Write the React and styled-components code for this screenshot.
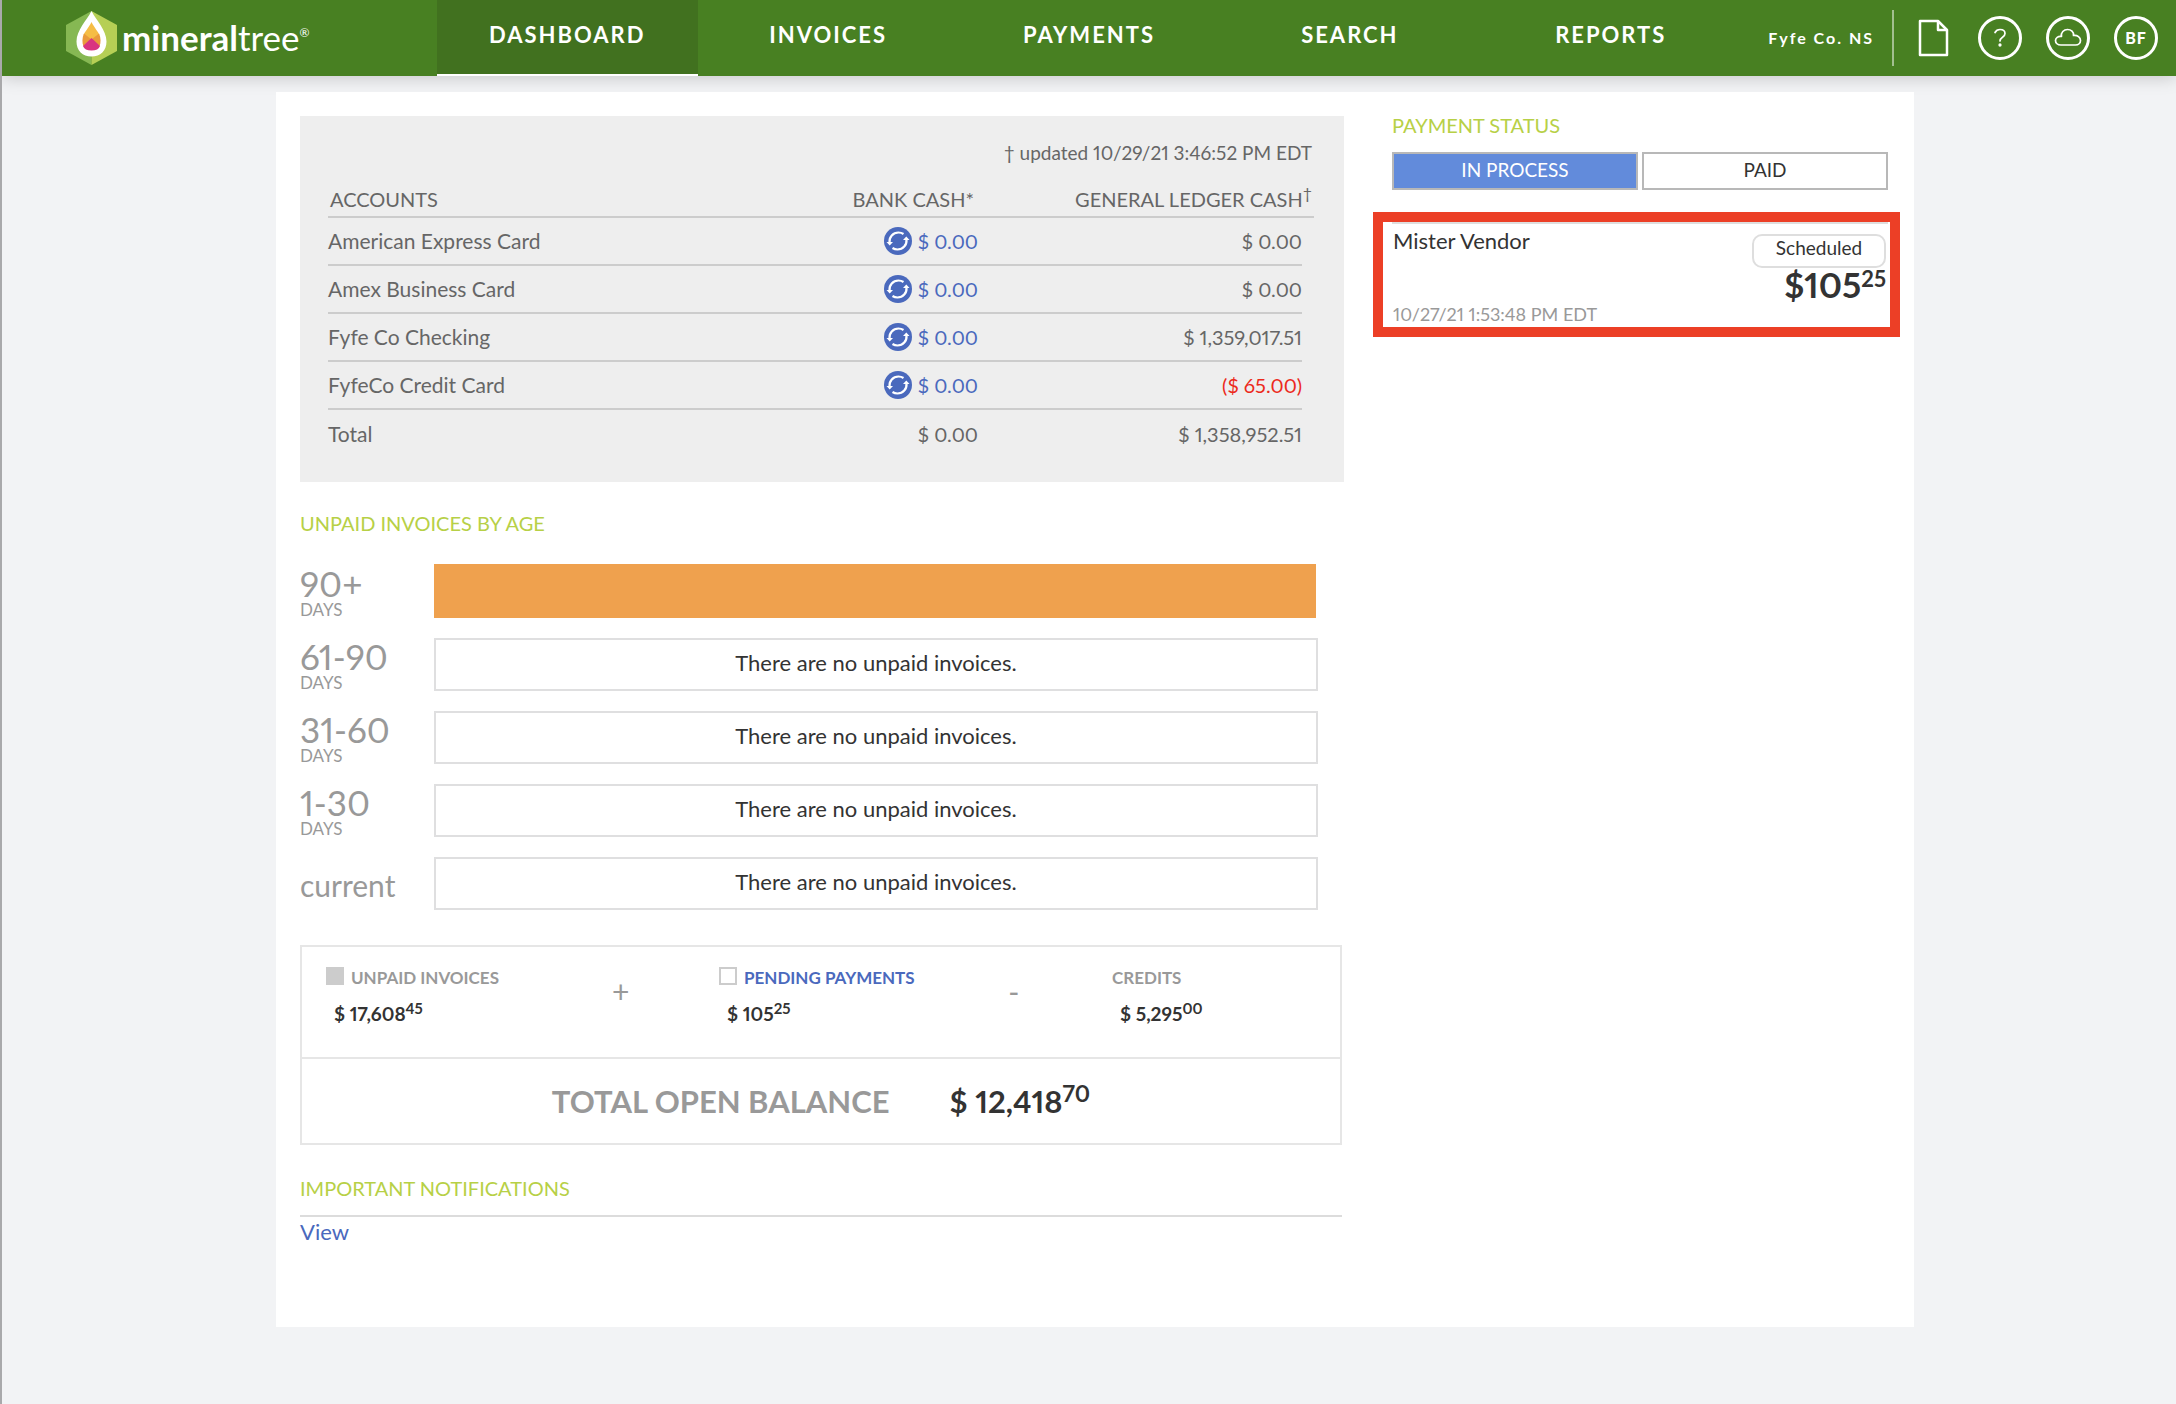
import React, { useState } from 'react'
import styled, { createGlobalStyle } from "styled-components"

const GlobalStyle = createGlobalStyle`
  * {
    box-sizing: border-box;
  }
  html {
    background: #f2f3f5;
  }
  body {
    margin: 0;
    border-left: 2px solid #a9a9ab;
    min-height: 100vh;
    font-family: Lato, "Open Sans", sans-serif;
    font-size: 20px;
    line-height: 24px;
    font-variant-numeric: proportional-nums;
    color: #333;
  }
  button, input {
    font: inherit;
    font-variant-numeric: inherit;
    color: inherit;
    margin: 0;
    padding: 0;
  }
`

const Header = styled.header`
  display: flex;
  height: 76px;
  background: #488022;
  color: white;
  box-shadow: 0 2px 16px rgba(0, 0, 0, 0.18);
`

const Brand = styled.a`
  display: flex;
  align-items: center;
  gap: 5px;
  width: 20%;
  padding-left: 64px;
  color: white;
  text-decoration: none;
  svg {
    flex: none;
  }
`

const BrandName = styled.span`
  font-size: 35px;
  line-height: 40px;
  padding-bottom: 2px;
  font-weight: 700;
  white-space: nowrap;
`

const BrandLight = styled.span`
  font-weight: 400;
`

const BrandMark = styled.sup`
  font-size: 12px;
  line-height: 12px;
  vertical-align: 14px;
`

const Nav = styled.nav`
  display: grid;
  grid-template-columns: repeat(5, 1fr);
  width: 60%;
`

const NavLink = styled.a`
  height: 76px;
  line-height: 70px;
  font-size: 22px;
  font-weight: 700;
  letter-spacing: 2px;
  text-align: center;
  text-decoration: none;
  color: white;
  background: ${(props) => (props.$active ? "#41711f" : "transparent")};
  border-bottom: 2px solid ${(props) => (props.$active ? "white" : "transparent")};
`

const HeaderTools = styled.div`
  display: flex;
  align-items: center;
  justify-content: flex-end;
  gap: 24px;
  flex: 1;
  padding-right: 18px;
`

const Company = styled.span`
  padding-right: 18px;
  border-right: 2px solid #a3bf90;
  line-height: 56px;
  font-size: 16px;
  font-weight: 700;
  letter-spacing: 2px;
  white-space: nowrap;
`

const ToolButton = styled.button`
  display: flex;
  align-items: center;
  width: 36px;
  height: 44px;
  border: 0;
  background: transparent;
  cursor: pointer;
`

const RoundButton = styled(ToolButton)`
  justify-content: center;
  width: 44px;
  border: 3px solid white;
  border-radius: 50%;
  font-size: 16px;
  font-weight: 900;
  letter-spacing: 1px;
`

const Page = styled.main`
  display: grid;
  grid-template-columns: 1044fr 527fr;
  gap: 29px;
  align-items: start;
  margin: 16px 262px 78px 274px;
  padding: 24px 14px 83px 24px;
  background: white;
`

const AccountsPanel = styled.section`
  padding: 25px 30px 24px 28px;
  background: #eee;
  color: #666;
`

const Updated = styled.p`
  margin: 0;
  padding: 0 2px 1px 0;
  font-size: 19px;
  text-align: right;
`

const AccountsTable = styled.table`
  width: 100%;
  table-layout: fixed;
  border-spacing: 0;
`

const Column = styled.col`
  width: ${(props) => props.$width || "auto"};
`

const AccountsHead = styled.th`
  height: 52px;
  padding: 0 ${(props) => props.$right || "0"} 5px 2px;
  border-bottom: 2px solid #ccc;
  font-weight: 400;
  text-align: ${(props) => props.$align || "left"};
  vertical-align: bottom;
  white-space: nowrap;
  sup {
    font-size: 16px;
    line-height: 0;
  }
`

const AccountsCell = styled.td`
  height: 48px;
  padding: 0;
  border-bottom: 2px solid #ccc;
  font-size: 21px;
  tfoot & {
    border: 0;
  }
`

const MoneyCell = styled(AccountsCell)`
  font-size: 20px;
  text-align: right;
  color: ${(props) => (props.$negative ? "#ec2a1c" : "inherit")};
`

const SpacerCell = styled.td`
  padding: 0;
`

const RefreshButton = styled.button`
  display: inline-flex;
  align-items: center;
  gap: 6px;
  border: 0;
  background: transparent;
  color: #4a69bd;
  vertical-align: middle;
  cursor: pointer;
`

const SectionTitle = styled.h2`
  margin: ${(props) => props.$margin || "0"};
  font-size: 20px;
  line-height: ${(props) => (props.$tight ? "18px" : "24px")};
  font-weight: 400;
  color: #b7d046;
`

const AgeList = styled.ul`
  display: flex;
  flex-direction: column;
  gap: 20px;
  margin: 0 0 35px;
  padding: 0 26px 0 0;
  list-style: none;
`

const AgeRow = styled.li`
  display: grid;
  grid-template-columns: 134px 1fr;
  align-items: center;
`

const AgeLabel = styled.div`
  height: 53px;
  color: #999;
`

const AgeRange = styled.div`
  font-size: 35px;
  line-height: 36px;
`

const AgeUnit = styled.div`
  font-size: 17px;
  line-height: 18px;
`

const AgeCurrent = styled.div`
  font-size: 30px;
  line-height: 56px;
`

const AgeBar = styled.div`
  height: 54px;
  background: #efa14e;
`

const AgeEmpty = styled.div`
  height: 53px;
  border: 2px solid #dfdfe0;
  font-size: 22px;
  line-height: 46px;
  text-align: center;
`

const Balance = styled.section`
  margin-right: 2px;
  border: 2px solid #e6e6e6;
`

const Terms = styled.div`
  display: grid;
  grid-template-columns: 393fr 393fr 228fr;
  height: 112px;
  padding: 20px 0 0 24px;
  border-bottom: 2px solid #e6e6e6;
`

const Term = styled.div`
  display: grid;
  grid-template-columns: 1fr 1fr;
`

const TermLabel = styled.label`
  display: flex;
  gap: 7px;
  font-size: 17px;
  line-height: 22px;
  font-weight: 700;
  white-space: nowrap;
  color: ${(props) => (props.$link ? "#4a69bd" : "#999")};
`

const Check = styled.input`
  appearance: none;
  flex: none;
  width: 18px;
  height: 18px;
  border: 2px solid #ccc;
  &:checked {
    background: #ccc;
  }
`

const TermAmount = styled.div`
  margin: 14px 0 0 8px;
  font-size: 19px;
  line-height: 22px;
  font-weight: 700;
  sup {
    font-size: 15px;
    line-height: 0;
  }
`

const Operator = styled.div`
  padding-top: 6px;
  text-align: center;
  font-size: 30px;
  line-height: 36px;
  color: #999;
`

const Total = styled.div`
  display: flex;
  align-items: center;
  justify-content: center;
  gap: 60px;
  height: 84px;
  font-size: 31px;
  line-height: 40px;
  font-weight: 700;
  color: #999;
`

const TotalAmount = styled.span`
  color: #333;
  sup {
    font-size: 23px;
    line-height: 0;
  }
`

const Notifications = styled.div`
  margin-right: 2px;
  padding-top: 3px;
  border-top: 2px solid #dcdcdc;
`

const ViewLink = styled.a`
  font-size: 22px;
  color: #4a69bd;
  text-decoration: none;
`

const Tabs = styled.div`
  display: grid;
  grid-template-columns: 1fr 1fr;
  gap: 4px;
  margin: 18px 12px 22px 19px;
`

const Tab = styled.button`
  height: 38px;
  padding-bottom: 2px;
  border: 2px solid #b8b8b8;
  font-size: 19px;
  line-height: 32px;
  color: ${(props) => (props.$active ? "white" : "#333")};
  background: ${(props) => (props.$active ? "#628bdb" : "white")};
  cursor: pointer;
`

const Highlight = styled.div`
  height: 125px;
  padding: 0 2px 0 9px;
  border: 10px solid #ec3f26;
`

const Payment = styled.article`
  display: flex;
  justify-content: space-between;
  height: 105px;
  padding: 5px 2px 1px 1px;
  border-top: 2px solid #dedede;
`

const PaymentInfo = styled.div`
  display: flex;
  flex-direction: column;
  justify-content: space-between;
`

const Vendor = styled.div`
  font-size: 22px;
`

const PaymentDate = styled.time`
  font-size: 18px;
  color: #999;
`

const PaymentSide = styled.div`
  display: flex;
  flex-direction: column;
  align-items: flex-end;
  padding-top: 5px;
`

const Badge = styled.span`
  width: 134px;
  height: 34px;
  border: 2px solid #dedede;
  border-radius: 10px;
  font-size: 19px;
  line-height: 24px;
  text-align: center;
`

const PaymentAmount = styled.div`
  font-size: 35px;
  line-height: 32px;
  font-weight: 700;
  sup {
    font-size: 22px;
    line-height: 0;
    vertical-align: 11px;
  }
`

const accounts = [
  { name: "American Express Card", bank: "$ 0.00", ledger: "$ 0.00" },
  { name: "Amex Business Card", bank: "$ 0.00", ledger: "$ 0.00" },
  { name: "Fyfe Co Checking", bank: "$ 0.00", ledger: "$ 1,359,017.51" },
  { name: "FyfeCo Credit Card", bank: "$ 0.00", ledger: "($ 65.00)", negative: true },
]

const ages = [
  { range: "90+", share: 99.8 },
  { range: "61-90" },
  { range: "31-60" },
  { range: "1-30" },
  { range: "current" },
]

const LogoIcon = () => (
  <svg width="51" height="54" viewBox="0 0 51 54" aria-hidden="true">
    <path d="M25.500 0L0 14v26l25.500 14z" fill="#86b853" />
    <path d="M25.500 0L51 14v26L25.500 54z" fill="#b6cf55" />
    <path d="M25.500 0C21 9 10.500 19 10.500 30.500c0 9 6 15 15 15s15-6 15-15C40.500 19 30 9 25.500 0z" fill="white" />
    <path d="M25.500 11C22.500 17 19 20.500 17.500 24l8 8 8-8C32 20.500 28.500 17 25.500 11z" fill="#f5bd45" />
    <path d="M18 22.500l7.500 6-8 7c-1.500-4-1.500-8.500.5-13zM33 22.500l-7.500 6 8 7c1.500-4 1.500-8.500-.5-13z" fill="#e99a3c" />
    <path d="M25.500 27l-8.500 8c1 3 4 4.500 8.500 4.500s7.500-1.500 8.500-4.500z" fill="#d93480" />
  </svg>
)

const DocumentIcon = () => (
  <svg width="32" height="38" viewBox="0 0 32 38" fill="none" stroke="white" strokeWidth="2.500" strokeLinejoin="round">
    <path d="M2 2h18l9 9v25H2z" />
    <path d="M20 2v9h9" />
  </svg>
)

const CloudIcon = () => (
  <svg width="28" height="20" viewBox="0 0 28 20" fill="none" stroke="white" strokeWidth="1.700" strokeLinejoin="round">
    <path d="M7 17C3.500 17 1.500 15 1.500 12.500S4 8 7.500 8.500C6.500 4.500 10 1.500 13.500 1.500S20 4 19.500 7.500c4-.5 7 2 7 5 0 2.500-2 4.500-5 4.500z" />
  </svg>
)

const QuestionIcon = () => (
  <svg width="14" height="20" viewBox="0 0 14 20" fill="none" stroke="white" strokeWidth="1.700" strokeLinecap="round">
    <path d="M2 4.500C3 2.500 5 1.500 7 1.500c3 0 5 1.500 5 4 0 4-5 3.500-5 7.500" />
    <circle cx="7" cy="17" r="0.800" fill="white" />
  </svg>
)

const RefreshIcon = () => (
  <svg width="28" height="28" viewBox="0 0 28 28" fill="none" aria-hidden="true">
    <circle cx="14" cy="14" r="14" fill="#4a69bd" />
    <path d="M5.500 15.500C5 10 9 5.500 14.500 5.500c2 0 3.500.5 5 1.500M22.500 12.500C23 18 19 22.500 13.500 22.500c-2 0-3.500-.5-5-1.500" stroke="white" strokeWidth="2.200" />
    <path d="M2.500 15h6.500L5.700 18.500zM25.500 13H19l3.300-3.500z" fill="white" />
  </svg>
)

const navItems = ["DASHBOARD", "INVOICES", "PAYMENTS", "SEARCH", "REPORTS"]

const TopBar = () => (
  <Header>
    <Brand href="#home">
      <LogoIcon />
      <BrandName>
        mineral<BrandLight>tree<BrandMark>®</BrandMark></BrandLight>
      </BrandName>
    </Brand>
    <Nav>
      {navItems.map((item, index) => (
        <NavLink key={item} href={`#${item.toLowerCase()}`} $active={index === 0}>
          {item}
        </NavLink>
      ))}
    </Nav>
    <HeaderTools>
      <Company>Fyfe Co. NS</Company>
      <ToolButton aria-label="Documents"><DocumentIcon /></ToolButton>
      <RoundButton aria-label="Help"><QuestionIcon /></RoundButton>
      <RoundButton aria-label="Cloud"><CloudIcon /></RoundButton>
      <RoundButton>BF</RoundButton>
    </HeaderTools>
  </Header>
)

const Accounts = () => (
  <AccountsPanel>
    <Updated>† updated 10/29/21 3:46:52 PM EDT</Updated>
    <AccountsTable>
      <colgroup>
        <Column />
        <Column $width="250px" />
        <Column $width="324px" />
        <Column $width="12px" />
      </colgroup>
      <thead>
        <tr>
          <AccountsHead>ACCOUNTS</AccountsHead>
          <AccountsHead $align="right" $right="4px">BANK CASH*</AccountsHead>
          <AccountsHead $align="right" $right="2px" colSpan="2">
            GENERAL LEDGER CASH<sup>†</sup>
          </AccountsHead>
        </tr>
      </thead>
      <tbody>
        {accounts.map((account) => (
          <tr key={account.name}>
            <AccountsCell>{account.name}</AccountsCell>
            <MoneyCell>
              <RefreshButton>
                <RefreshIcon />
                {account.bank}
              </RefreshButton>
            </MoneyCell>
            <MoneyCell $negative={account.negative}>{account.ledger}</MoneyCell>
            <SpacerCell />
          </tr>
        ))}
      </tbody>
      <tfoot>
        <tr>
          <AccountsCell>Total</AccountsCell>
          <MoneyCell>$ 0.00</MoneyCell>
          <MoneyCell>$ 1,358,952.51</MoneyCell>
          <SpacerCell />
        </tr>
      </tfoot>
    </AccountsTable>
  </AccountsPanel>
)

const InvoiceAges = () => (
  <AgeList>
    {ages.map(({ range, share }) => (
      <AgeRow key={range}>
        <AgeLabel>
          {range === "current" ? (
            <AgeCurrent>{range}</AgeCurrent>
          ) : (
            <>
              <AgeRange>{range}</AgeRange>
              <AgeUnit>DAYS</AgeUnit>
            </>
          )}
        </AgeLabel>
        {share ? (
          <AgeBar style={{ width: `${share}%` }} />
        ) : (
          <AgeEmpty>There are no unpaid invoices.</AgeEmpty>
        )}
      </AgeRow>
    ))}
  </AgeList>
)

const OpenBalance = () => (
  <Balance>
    <Terms>
      <Term>
        <div>
          <TermLabel>
            <Check type="checkbox" defaultChecked />
            UNPAID INVOICES
          </TermLabel>
          <TermAmount>$ 17,608<sup>45</sup></TermAmount>
        </div>
        <Operator>+</Operator>
      </Term>
      <Term>
        <div>
          <TermLabel $link>
            <Check type="checkbox" />
            PENDING PAYMENTS
          </TermLabel>
          <TermAmount>$ 105<sup>25</sup></TermAmount>
        </div>
        <Operator>-</Operator>
      </Term>
      <Term>
        <div>
          <TermLabel as="div">CREDITS</TermLabel>
          <TermAmount>$ 5,295<sup>00</sup></TermAmount>
        </div>
      </Term>
    </Terms>
    <Total>
      <span>TOTAL OPEN BALANCE</span>
      <TotalAmount>$ 12,418<sup>70</sup></TotalAmount>
    </Total>
  </Balance>
)

const PaymentStatus = () => {
  const [tab, setTab] = useState("IN PROCESS")

  return (
    <aside>
      <SectionTitle $tight $margin="0 0 0 19px">PAYMENT STATUS</SectionTitle>
      <Tabs>
        {["IN PROCESS", "PAID"].map((name) => (
          <Tab key={name} $active={tab === name} onClick={() => setTab(name)}>
            {name}
          </Tab>
        ))}
      </Tabs>
      <Highlight>
        <Payment>
          <PaymentInfo>
            <Vendor>Mister Vendor</Vendor>
            <PaymentDate>10/27/21 1:53:48 PM EDT</PaymentDate>
          </PaymentInfo>
          <PaymentSide>
            <Badge>Scheduled</Badge>
            <PaymentAmount>$105<sup>25</sup></PaymentAmount>
          </PaymentSide>
        </Payment>
      </Highlight>
    </aside>
  )
}

export default function App() {
  return (
    <>
      <GlobalStyle />
      <TopBar />
      <Page>
        <div>
          <Accounts />
          <SectionTitle $margin="29px 0">UNPAID INVOICES BY AGE</SectionTitle>
          <InvoiceAges />
          <OpenBalance />
          <SectionTitle $margin="31px 0 15px">IMPORTANT NOTIFICATIONS</SectionTitle>
          <Notifications>
            <ViewLink href="#notifications">View</ViewLink>
          </Notifications>
        </div>
        <PaymentStatus />
      </Page>
    </>
  )
}
